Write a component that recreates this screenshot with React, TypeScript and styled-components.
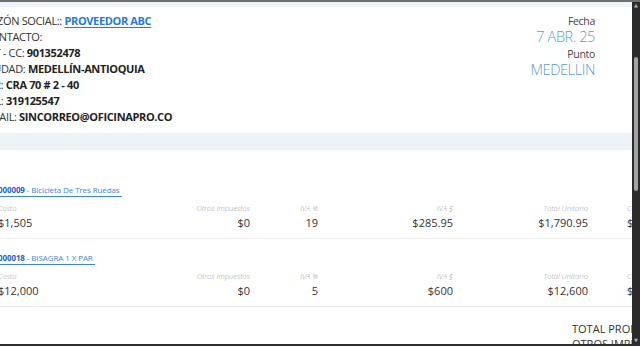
import React from "react"
import styled, { createGlobalStyle } from "styled-components"

const GlobalStyle = createGlobalStyle`
  html, body {
    margin: 0;
    padding: 0;
    background: #ffffff;
    overflow: hidden;
  }
  body {
    font-family: "Open Sans", "Noto Sans", "Liberation Sans", sans-serif;
    color: #333;
  }
`

interface Producto {
  codigo: string
  nombre: string
  costo: string
  otros: string
  ivaPct: string
  ivaValor: string
  total: string
}

const productos: Producto[] = [
  {
    codigo: "P000009",
    nombre: "Bicicleta De Tres Ruedas",
    costo: "$1,505",
    otros: "$0",
    ivaPct: "19",
    ivaValor: "$285.95",
    total: "$1,790.95",
  },
  {
    codigo: "P000018",
    nombre: "BISAGRA 1 X PAR",
    costo: "$12,000",
    otros: "$0",
    ivaPct: "5",
    ivaValor: "$600",
    total: "$12,600",
  },
]

const App = () => {
  return (
    <>
      <GlobalStyle />
      <Screen>
        <Viewport>
          <Content>
            <TopBand />
            <Header>
              <Datos>
                <Linea>
                  RAZÓN SOCIAL:: <Proveedor>PROVEEDOR ABC</Proveedor>
                </Linea>
                <Linea>CONTACTO:</Linea>
                <Linea>
                  NIT - CC: <Valor>901352478</Valor>
                </Linea>
                <Linea>
                  CIUDAD: <Valor>MEDELLÍN-ANTIOQUIA</Valor>
                </Linea>
                <Linea>
                  DIR: <Valor>CRA 70 # 2 - 40</Valor>
                </Linea>
                <Linea>
                  TEL: <Valor>319125547</Valor>
                </Linea>
                <Linea>
                  EMAIL: <Valor>SINCORREO@OFICINAPRO.CO</Valor>
                </Linea>
              </Datos>
              <Meta>
                <MetaLabel>Fecha</MetaLabel>
                <MetaValue>7 ABR. 25</MetaValue>
                <MetaLabel>Punto</MetaLabel>
                <MetaValue>MEDELLIN</MetaValue>
              </Meta>
            </Header>
            <MidBand />
            <Productos>
              {productos.map((p) => (
                <Item key={p.codigo}>
                  <ItemLink>
                    <Codigo>{p.codigo.slice(1)}</Codigo> - {p.nombre}
                  </ItemLink>
                  <Grid>
                    <Label>Costo</Label>
                    <Label $right>Otros Impuestos</Label>
                    <Label $right>IVA %</Label>
                    <Label $right>IVA $</Label>
                    <Label $right>Total Unitario</Label>
                    <Label $last>Costo Total</Label>
                    <Cell>{p.costo}</Cell>
                    <Cell $right>{p.otros}</Cell>
                    <Cell $right>{p.ivaPct}</Cell>
                    <Cell $right>{p.ivaValor}</Cell>
                    <Cell $right>{p.total}</Cell>
                    <Cell $last>{p.total}</Cell>
                  </Grid>
                </Item>
              ))}
              <Totales>
                <TotalLinea>TOTAL PRODUCTOS</TotalLinea>
                <TotalLinea>OTROS IMPUESTOS</TotalLinea>
              </Totales>
            </Productos>
          </Content>
        </Viewport>
        <Scrollbar>
          <Arrow>▲</Arrow>
          <Track>
            <Thumb />
          </Track>
          <Arrow>▼</Arrow>
        </Scrollbar>
      </Screen>
    </>
  )
}

export default App

const Screen = styled.div`
  width: 640px;
  height: 346px;
  display: flex;
  box-sizing: border-box;
  border-top: 2px solid #6f6f6f;
  border-bottom: 2px solid #2e2e2e;
  overflow: hidden;
`

const Viewport = styled.div`
  flex: 1;
  min-width: 0;
  overflow: hidden;
`

const Content = styled.div`
  margin-left: -16px;
`

const TopBand = styled.div`
  height: 5px;
  background: #eef2f9;
`

const MidBand = styled.div`
  height: 17px;
  background: #eef2f9;
`

const Header = styled.div`
  display: flex;
  justify-content: space-between;
  align-items: flex-start;
  padding: 6px 37px 8px 0;
  height: 126px;
  box-sizing: border-box;
`

const Datos = styled.div`
  display: flex;
  flex-direction: column;
`

const Linea = styled.div`
  font-size: 11px;
  line-height: 16px;
  letter-spacing: -0.35px;
  color: #333;
  white-space: nowrap;
`

const Valor = styled.span`
  font-weight: 700;
  color: #222;
`

const Proveedor = styled.span`
  font-weight: 700;
  color: #1e7ae0;
  text-decoration: underline;
  text-underline-offset: 2px;
`

const Meta = styled.div`
  display: flex;
  flex-direction: column;
  align-items: flex-end;
  padding-top: 1px;
`

const MetaLabel = styled.div`
  font-size: 10.5px;
  line-height: 14px;
  letter-spacing: -0.3px;
  color: #444;
`

const MetaValue = styled.div`
  font-size: 14.5px;
  font-weight: 300;
  line-height: 17px;
  letter-spacing: -0.4px;
  color: #5b9bd5;
  margin-bottom: 2px;
`

const Productos = styled.div`
  padding-top: 21px;
  width: 780px;
`

const Item = styled.div`
  padding: 13px 0 8px 14px;
  border-bottom: 1px solid #eeeeee;
`

const ItemLink = styled.div`
  width: fit-content;
  font-size: 8px;
  line-height: 12px;
  letter-spacing: -0.1px;
  color: #3b86dc;
  border-bottom: 1px solid #3b86dc;
  padding-right: 2px;
  margin-bottom: 5px;
`

const Codigo = styled.span`
  font-weight: 700;
  color: #1f62c4;
`

const Grid = styled.div`
  display: grid;
  grid-template-columns: 132px 120px 68px 135px 135px 1fr;
  grid-template-rows: 12px 16px;
  align-items: center;
`

const Label = styled.div<{ $right?: boolean; $last?: boolean }>`
  font-size: 7.5px;
  font-style: italic;
  font-weight: 300;
  color: #a0a0a0;
  text-align: ${({ $right }) => ($right ? "right" : "left")};
  padding-left: ${({ $last }) => ($last ? "39px" : "0")};
  white-space: nowrap;
`

const Cell = styled.div<{ $right?: boolean; $last?: boolean }>`
  font-size: 11px;
  color: #333;
  text-align: ${({ $right }) => ($right ? "right" : "left")};
  padding-left: ${({ $last }) => ($last ? "39px" : "0")};
  white-space: nowrap;
`

const Totales = styled.div`
  padding: 14px 0 0 588px;
`

const TotalLinea = styled.div`
  font-size: 11px;
  line-height: 15px;
  color: #333;
  white-space: nowrap;
`

const Scrollbar = styled.div`
  width: 8px;
  flex: none;
  background: #2b2b2b;
  display: flex;
  flex-direction: column;
  align-items: center;
`

const Arrow = styled.div`
  font-size: 5px;
  line-height: 7px;
  color: #b0b0b0;
  font-family: "DejaVu Sans", sans-serif;
`

const Track = styled.div`
  flex: 1;
  width: 100%;
  display: flex;
  justify-content: center;
  padding-top: 48px;
`

const Thumb = styled.div`
  width: 4px;
  height: 134px;
  border-radius: 2px;
  background: #a4a4a4;
`
